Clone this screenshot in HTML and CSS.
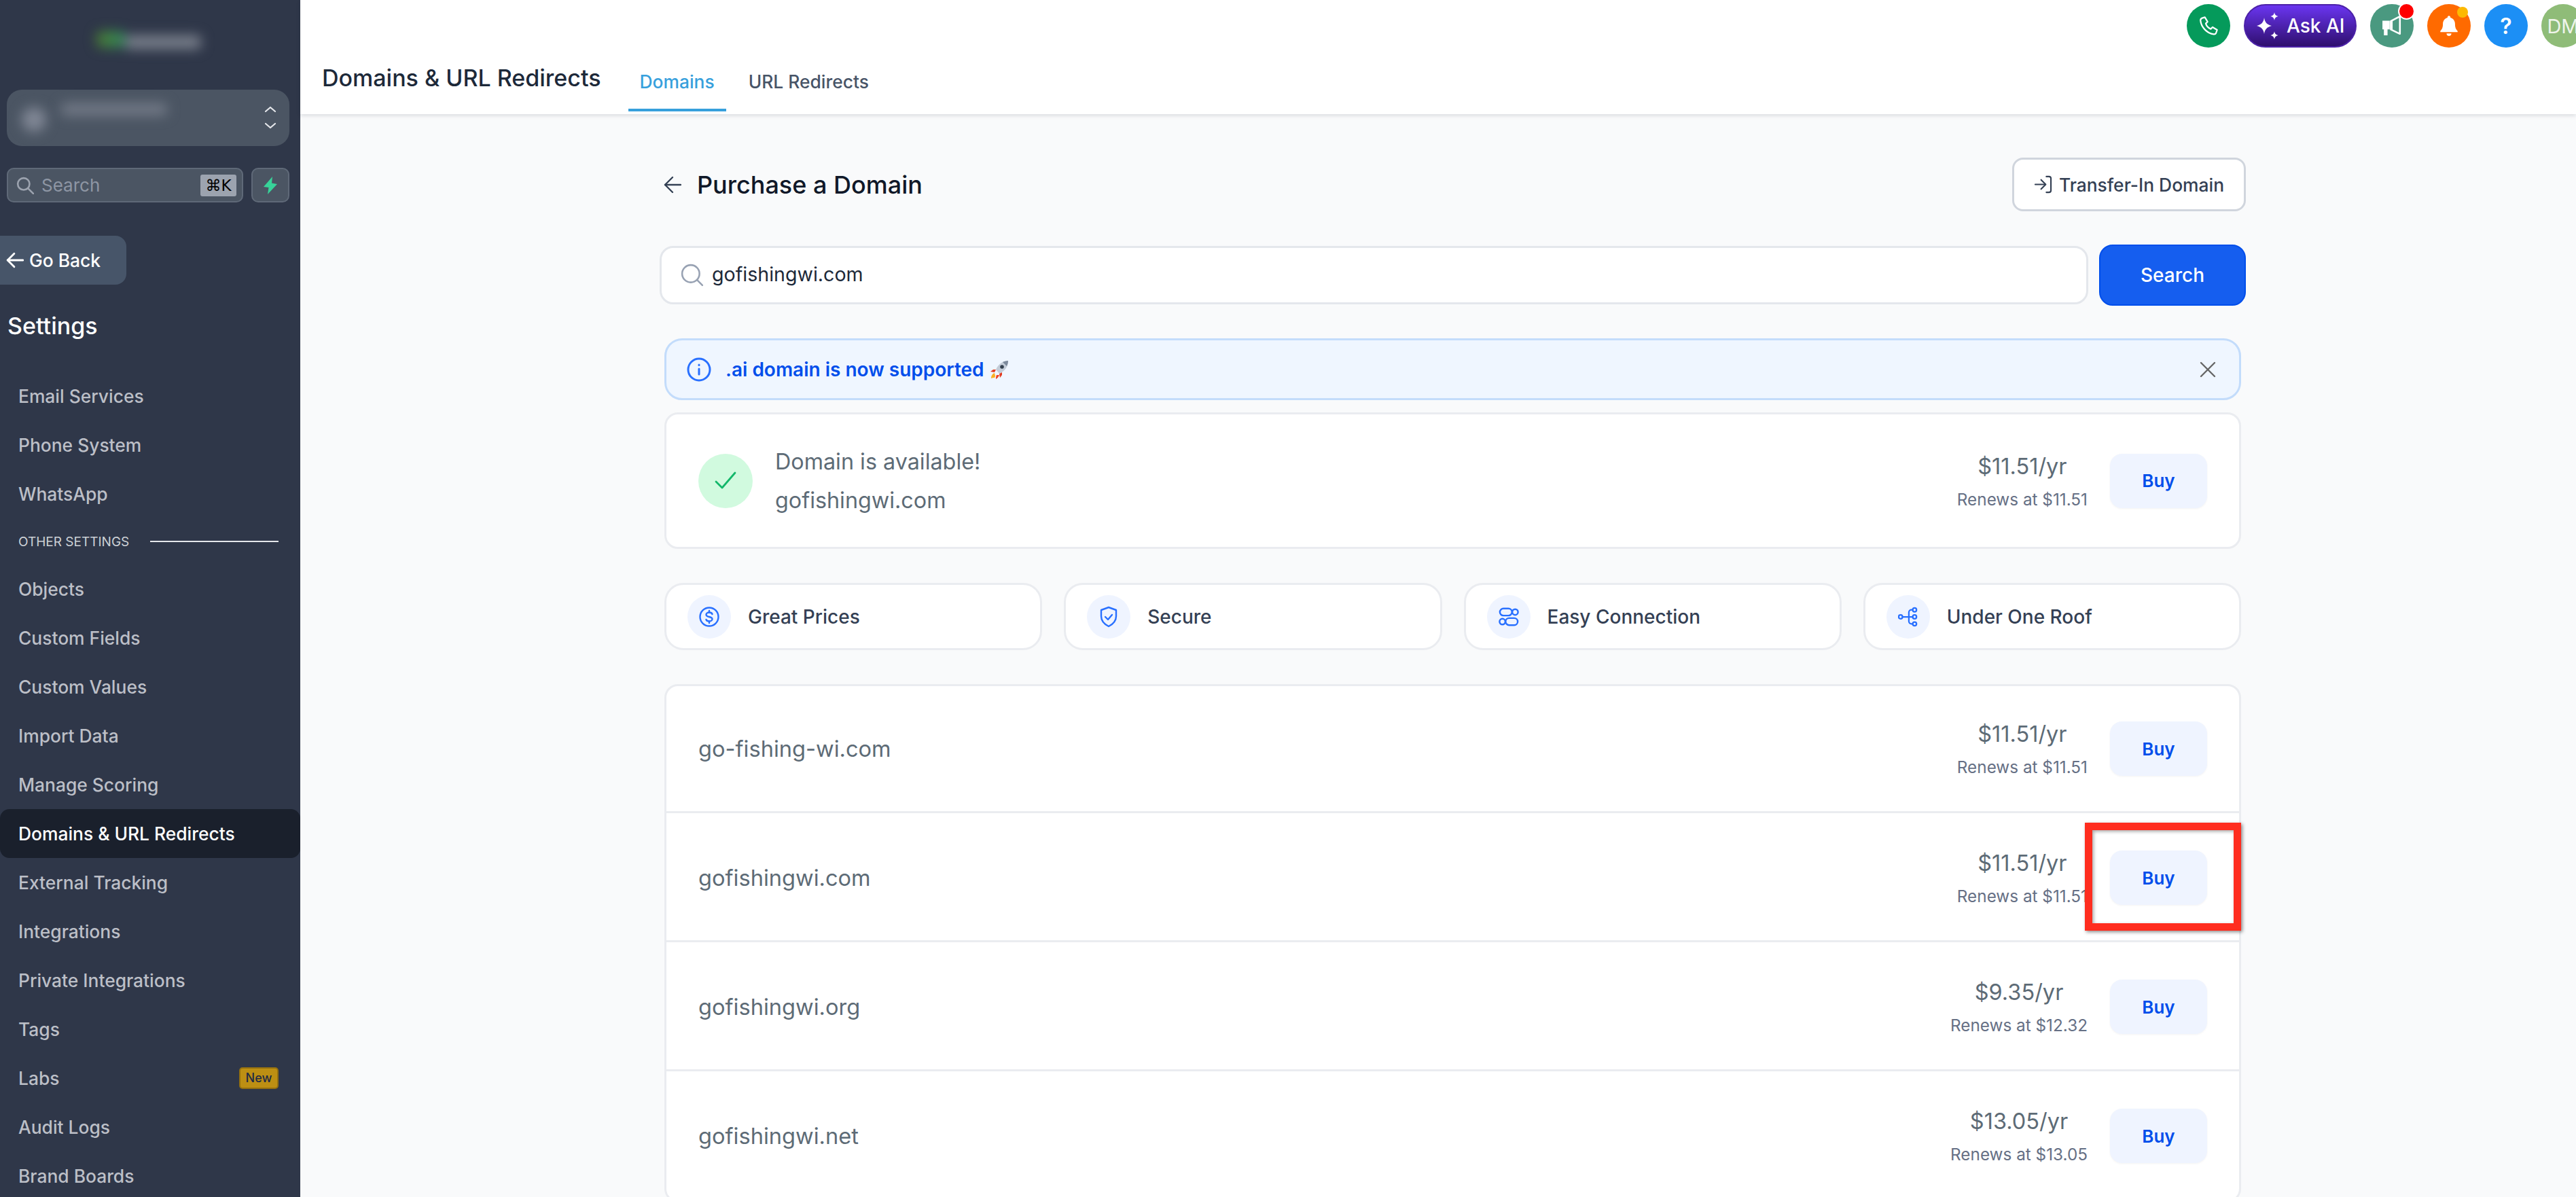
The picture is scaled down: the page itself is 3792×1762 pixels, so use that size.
FILE: index.html
```html
<!DOCTYPE html>
<html lang="en">
<head>
    <meta charset="UTF-8">
    <title>Domains &amp; URL Redirects</title>
    <link rel="stylesheet" href="styles.css">
</head>
<body>
    <aside class="sidebar">
        <div class="logo">
            <span class="logo-mark"></span>
            <span class="logo-name"></span>
        </div>

        <div class="switcher">
            <span class="switcher-dot"></span>
            <span class="switcher-name"></span>
            <svg class="switcher-arrows" viewBox="0 0 20 36" fill="none" stroke="#e5e7eb" stroke-width="2.2" stroke-linecap="round" stroke-linejoin="round"><path d="M3 9l7-6 7 6"/><path d="M3 27l7 6 7-6"/></svg>
        </div>

        <div class="side-search-row">
            <div class="side-search">
                <svg class="side-search-icon" viewBox="0 0 24 24" fill="none" stroke="#9ca3af" stroke-width="2.4" stroke-linecap="round"><circle cx="10" cy="10" r="8"/><path d="M16 16l7 7"/></svg>
                <span class="side-search-text">Search</span>
                <span class="kbd">⌘K</span>
            </div>
            <div class="bolt-btn">
                <svg viewBox="0 0 24 26" width="24" height="26"><path d="M15 0L2 15l7.500 1L8 26l14-15-8-1.500z" fill="#37d399"/></svg>
            </div>
        </div>

        <div class="go-back">
            <svg viewBox="0 0 24 24" width="26" height="26" fill="none" stroke="#fff" stroke-width="2.6" stroke-linecap="round" stroke-linejoin="round"><path d="M23 12H2"/><path d="M11 3l-9 9 9 9"/></svg>
            <span>Go Back</span>
        </div>

        <div class="side-title">Settings</div>

        <nav class="menu">
            <a class="menu-item">Email Services</a>
            <a class="menu-item">Phone System</a>
            <a class="menu-item">WhatsApp</a>
            <div class="menu-section"><span>OTHER SETTINGS</span><i></i></div>
            <a class="menu-item">Objects</a>
            <a class="menu-item">Custom Fields</a>
            <a class="menu-item">Custom Values</a>
            <a class="menu-item">Import Data</a>
            <a class="menu-item">Manage Scoring</a>
            <a class="menu-item active">Domains &amp; URL Redirects</a>
            <a class="menu-item">External Tracking</a>
            <a class="menu-item">Integrations</a>
            <a class="menu-item">Private Integrations</a>
            <a class="menu-item">Tags</a>
            <a class="menu-item">Labs <span class="badge-new">New</span></a>
            <a class="menu-item">Audit Logs</a>
            <a class="menu-item">Brand Boards</a>
        </nav>
    </aside>

    <div class="main">
        <header class="topbar">
            <div class="actions">
                <span class="circle green">
                    <svg viewBox="0 0 24 24" width="32" height="32" fill="none" stroke="#fff" stroke-width="1.700" stroke-linecap="round" stroke-linejoin="round"><path d="M5 3.500l3-1 3 5-2 2c.8 2.600 2.900 4.900 5.500 6l2-2 5 3-1 3c-.4 1.200-1.500 2-2.800 1.800C10.500 20.300 4 13.700 3.200 6.300 3.100 5 3.900 3.900 5 3.500z"/></svg>
                </span>
                <span class="ask-ai">
                    <svg viewBox="0 0 36 40" width="36" height="40" fill="#fff"><path d="M13 8c1 7 4 10 11 12-7 2-10 5-11 12-1-7-4-10-11-12 7-2 10-5 11-12z"/><path d="M28 0c.6 3.500 2 5 5.500 6-3.500 1-4.900 2.500-5.500 6-.6-3.500-2-5-5.500-6 3.500-1 4.900-2.500 5.500-6z"/><path d="M28 28c.6 3.500 2 5 5.500 6-3.500 1-4.900 2.500-5.500 6-.6-3.500-2-5-5.500-6 3.500-1 4.900-2.500 5.500-6z"/></svg>
                    Ask AI
                </span>
                <span class="circle teal">
                    <svg viewBox="0 0 28 28" width="30" height="30"><path d="M1 7h10l0 12H8v8H3v-8H1z" fill="#fff"/><path d="M12.500 7.500L25 1v24l-12.500-6z" fill="none" stroke="#fff" stroke-width="2.400" stroke-linejoin="round"/><path d="M12 7h3v12h-3z" fill="#fff"/></svg>
                    <i class="dot-red"></i>
                </span>
                <span class="circle orange">
                    <svg viewBox="0 0 24 24" width="34" height="34" fill="#fff"><path d="M12 1.500c.9 0 1.500.7 1.500 1.500v.6c3 .8 4.800 3.400 4.800 6.400 0 4 1 5.500 2.700 7.500v1H3v-1c1.700-2 2.700-3.500 2.700-7.500 0-3 1.800-5.600 4.800-6.400V3c0-.8.600-1.500 1.500-1.500z"/><path d="M9.500 20h5a2.500 2.500 0 0 1-5 0z"/></svg>
                    <i class="dot-yellow"></i>
                </span>
                <span class="circle blue help">?</span>
                <span class="circle sage avatar">DM</span>
            </div>
            <div class="page-nav">
                <h1 class="page-name">Domains &amp; URL Redirects</h1>
                <div class="tabs">
                    <a class="tab active">Domains</a>
                    <a class="tab">URL Redirects</a>
                </div>
            </div>
        </header>

        <main class="content">
            <div class="title-row">
                <div class="title-left">
                    <svg viewBox="0 0 26 26" width="26" height="26" fill="none" stroke="#344054" stroke-width="2.400" stroke-linecap="round" stroke-linejoin="round"><path d="M25 13H2"/><path d="M13 2L2 13l11 11"/></svg>
                    <h2>Purchase a Domain</h2>
                </div>
                <button class="btn-transfer">
                    <svg viewBox="0 0 28 28" width="27" height="27" fill="none" stroke="#344054" stroke-width="2.200" stroke-linecap="round" stroke-linejoin="round"><path d="M2 14h15"/><path d="M11 7l7 7-7 7"/><path d="M19 2h4a3 3 0 0 1 3 3v18a3 3 0 0 1-3 3h-4"/></svg>
                    Transfer-In Domain
                </button>
            </div>

            <div class="search-row">
                <div class="search-box">
                    <svg viewBox="0 0 32 32" width="34" height="34" fill="none" stroke="#98a2b3" stroke-width="2.400" stroke-linecap="round"><circle cx="14" cy="14" r="12"/><path d="M23 23l7 7"/></svg>
                    <span>gofishingwi.com</span>
                </div>
                <button class="btn-search">Search</button>
            </div>

            <div class="inner">
                <div class="notice">
                    <svg viewBox="0 0 36 36" width="36" height="36" fill="none" stroke="#2970ff" stroke-width="3" stroke-linecap="round"><circle cx="18" cy="18" r="16"/><path d="M18 17v8"/><path d="M18 11v.5"/></svg>
                    <span class="notice-text">.ai domain is now supported</span>
                    <svg class="rocket" viewBox="0 0 28 28" width="28" height="28"><path d="M7 19c-3 1-5 4-5 8 2-1 3-1 5-1 0 0 1-1 1-3z" fill="#fbb024"/><path d="M10 22c-1 2-1 4-1 6 2-1 4-3 5-6z" fill="#ef4423"/><path d="M5 14l-4 3 6 1 2-4z" fill="#e23c22"/><path d="M14 20l1 6 3-4 0-4z" fill="#e23c22"/><path d="M27 1c-7 0-14 4-18 13l5 6c9-4 13-11 13-19z" fill="#c3ccd8"/><path d="M27 1c-3 0-6 1-8 2l6 6c1-2 2-5 2-8z" fill="#7d8a9c"/><circle cx="18" cy="10" r="2.800" fill="#33404f"/></svg>
                    <svg class="notice-close" viewBox="0 0 24 24" width="24" height="24" fill="none" stroke="#666" stroke-width="2.400" stroke-linecap="round"><path d="M2 2l20 20"/><path d="M22 2L2 22"/></svg>
                </div>

                <div class="available card">
                    <span class="check-circle">
                        <svg viewBox="0 0 32 32" width="32" height="32" fill="none" stroke="#12b76a" stroke-width="2.800" stroke-linecap="round" stroke-linejoin="round"><path d="M2 17l9 9L30 4"/></svg>
                    </span>
                    <div class="available-text">
                        <div>Domain is available!</div>
                        <div>gofishingwi.com</div>
                    </div>
                    <div class="price">
                        <span class="price-year">$11.51/yr</span>
                        <span class="price-renew">Renews at $11.51</span>
                    </div>
                    <button class="btn-buy">Buy</button>
                </div>

                <div class="features">
                    <div class="feature">
                        <span class="feature-icon">
                            <svg viewBox="0 0 32 32" width="32" height="32" fill="none" stroke="#2970ff" stroke-width="2.400" stroke-linecap="round" stroke-linejoin="round"><circle cx="16" cy="16" r="13.500"/><path d="M20.500 12c-.5-1.500-2.500-2.500-4.500-2.500-2.500 0-4.500 1.300-4.500 3.200 0 4.300 9 2.300 9 6.600 0 1.900-2 3.200-4.500 3.200-2 0-4-1-4.500-2.500"/><path d="M16 7v2.500M16 22.500V25"/></svg>
                        </span>
                        Great Prices
                    </div>
                    <div class="feature">
                        <span class="feature-icon">
                            <svg viewBox="0 0 32 32" width="32" height="32" fill="none" stroke="#2970ff" stroke-width="2.400" stroke-linecap="round" stroke-linejoin="round"><path d="M16 2l11 4v9c0 7-5 12-11 15C10 27 5 22 5 15V6z"/><path d="M11 16l4 4 6-7"/></svg>
                        </span>
                        Secure
                    </div>
                    <div class="feature">
                        <span class="feature-icon">
                            <svg viewBox="0 0 32 32" width="30" height="30" fill="none" stroke="#2970ff" stroke-width="2.600" stroke-linejoin="round"><rect x="2" y="3" width="19" height="11" rx="5.500"/><circle cx="26" cy="8.500" r="4.500"/><circle cx="6" cy="23.500" r="4.500"/><rect x="11" y="18" width="19" height="11" rx="5.500"/></svg>
                        </span>
                        Easy Connection
                    </div>
                    <div class="feature">
                        <span class="feature-icon">
                            <svg viewBox="0 0 32 32" width="30" height="30" fill="none" stroke="#2970ff" stroke-width="2.400" stroke-linecap="round"><circle cx="4" cy="16" r="3"/><circle cx="26" cy="5" r="3"/><circle cx="26" cy="16" r="3"/><circle cx="26" cy="27" r="3"/><path d="M7 16h16"/><path d="M23 5h-2a4 4 0 0 0-4 4v14a4 4 0 0 0 4 4h2"/></svg>
                        </span>
                        Under One Roof
                    </div>
                </div>

                <div class="results card">
                    <div class="result">
                        <span class="domain">go-fishing-wi.com</span>
                        <div class="price">
                            <span class="price-year">$11.51/yr</span>
                            <span class="price-renew">Renews at $11.51</span>
                        </div>
                        <button class="btn-buy">Buy</button>
                    </div>
                    <div class="result">
                        <span class="domain">gofishingwi.com</span>
                        <div class="price">
                            <span class="price-year">$11.51/yr</span>
                            <span class="price-renew">Renews at $11.51</span>
                        </div>
                        <button class="btn-buy">Buy</button>
                        <div class="highlight"></div>
                    </div>
                    <div class="result">
                        <span class="domain">gofishingwi.org</span>
                        <div class="price">
                            <span class="price-year">$9.35/yr</span>
                            <span class="price-renew">Renews at $12.32</span>
                        </div>
                        <button class="btn-buy">Buy</button>
                    </div>
                    <div class="result">
                        <span class="domain">gofishingwi.net</span>
                        <div class="price">
                            <span class="price-year">$13.05/yr</span>
                            <span class="price-renew">Renews at $13.05</span>
                        </div>
                        <button class="btn-buy">Buy</button>
                    </div>
                </div>
            </div>
        </main>
    </div>
</body>
</html>
```

FILE: styles.css
```css
* {
    box-sizing: border-box;
}

html, body {
    height: 100%;
}

body {
    margin: 0;
    display: flex;
    overflow: hidden;
    font-family: Inter, "Noto Sans", sans-serif;
    background-color: #f9fafb;
    color: #101828;
}

button {
    font-family: inherit;
    cursor: pointer;
}

/* Sidebar */
.sidebar {
    width: 442px;
    height: 1762px;
    flex-shrink: 0;
    overflow: hidden;
    background-color: #2f3749;
}

.logo {
    height: 132px;
    padding: 46px 0 0 142px;
    display: flex;
    filter: blur(9px);
}

.logo-mark {
    width: 42px;
    height: 24px;
    background: linear-gradient(90deg, #4d7a30, #2f8a5c);
    border-radius: 8px;
}

.logo-name {
    width: 112px;
    height: 20px;
    margin-top: 6px;
    background-color: #7a808c;
    border-radius: 6px;
}

.switcher {
    height: 83px;
    margin: 0 16px 0 10px;
    position: relative;
    display: flex;
    background-color: #4b5563;
    border-radius: 22px;
}

.switcher-dot {
    width: 36px;
    height: 36px;
    margin: 26px 0 0 22px;
    background-color: #808795;
    border-radius: 50%;
    filter: blur(9px);
}

.switcher-name {
    width: 156px;
    height: 18px;
    margin: 20px 0 0 22px;
    background-color: #737a87;
    border-radius: 6px;
    filter: blur(9px);
}

.switcher-arrows {
    position: absolute;
    right: 18px;
    top: 23px;
    width: 20px;
    height: 36px;
}

.side-search-row {
    margin: 32px 16px 0 10px;
    display: flex;
    gap: 12px;
}

.side-search {
    flex: 1;
    height: 51px;
    padding: 0 8px 0 12px;
    display: flex;
    align-items: center;
    background-color: #4b5563;
    border: 2px solid #5f6978;
    border-radius: 10px;
}

.side-search-icon {
    width: 26px;
    height: 26px;
}

.side-search-text {
    flex: 1;
    margin-left: 11px;
    font-size: 26px;
    color: #8e96a4;
}

.kbd {
    width: 53px;
    height: 32px;
    line-height: 32px;
    text-align: center;
    font-size: 23px;
    font-family: "DejaVu Sans", Inter, sans-serif;
    color: #000;
    background-color: #9ca3af;
    border-radius: 3px;
}

.bolt-btn {
    width: 56px;
    height: 51px;
    display: flex;
    align-items: center;
    justify-content: center;
    background-color: #4b5563;
    border: 2px solid #5f6978;
    border-radius: 10px;
}

.go-back {
    width: 186px;
    height: 72px;
    margin-top: 49px;
    padding-left: 9px;
    display: flex;
    align-items: center;
    gap: 8px;
    font-size: 26.400px;
    font-weight: 500;
    color: #fff;
    background-color: #475569;
    border-radius: 0 16px 16px 0;
}

.side-title {
    margin: 39px 0 45px 11px;
    height: 44px;
    line-height: 44px;
    font-size: 34px;
    font-weight: 500;
    color: #fff;
}

.menu-item {
    height: 72px;
    padding: 0 32px 0 27px;
    display: flex;
    align-items: center;
    justify-content: space-between;
    font-size: 26.400px;
    font-weight: 500;
    color: #bcbfc7;
}

.menu-item.active {
    color: #fff;
    background-color: #1a202c;
    border-radius: 14px;
}

.menu-section {
    height: 68px;
    padding: 0 32px 0 27px;
    display: flex;
    align-items: center;
    gap: 31px;
    font-size: 19px;
    color: #cdd1d6;
}

.menu-section i {
    flex: 1;
    height: 2px;
    background-color: #e5e7eb;
}

.badge-new {
    width: 58px;
    height: 32px;
    line-height: 28px;
    text-align: center;
    font-size: 18px;
    font-weight: 500;
    color: #1f2a44;
    background-color: #bd8f13;
    border: 2px solid #94700f;
    border-radius: 5px;
}

/* Top bar */
.main {
    flex: 1;
    min-width: 0;
}

.topbar {
    height: 168px;
    background-color: #fff;
    box-shadow: 0 2px 6px rgba(16, 24, 40, 0.14);
}

.actions {
    height: 76px;
    margin-right: -13px;
    padding-top: 6px;
    display: flex;
    justify-content: flex-end;
    gap: 20px;
}

.circle {
    width: 64px;
    height: 64px;
    position: relative;
    display: flex;
    align-items: center;
    justify-content: center;
    border-radius: 50%;
    color: #fff;
}

.green { background-color: #059a5b; }
.teal { background-color: #4a9980; }
.orange { background-color: #ff6a00; }
.blue { background-color: #1c8ff5; }
.sage { background-color: #8fbc78; }

.help {
    font-size: 32px;
    font-weight: 600;
}

.avatar {
    font-size: 29px;
    color: #eef4ea;
}

.ask-ai {
    width: 166px;
    height: 64px;
    padding-left: 15px;
    display: flex;
    align-items: center;
    gap: 10px;
    font-size: 28px;
    font-weight: 500;
    color: #fff;
    background: linear-gradient(180deg, #6a35f0, #2f0f6e);
    border: 2px solid #4c22a8;
    border-radius: 32px;
}

.dot-red {
    width: 25px;
    height: 25px;
    position: absolute;
    top: -2px;
    right: -2px;
    background-color: #f00;
    border: 2px solid #fff;
    border-radius: 50%;
}

.dot-yellow {
    width: 16px;
    height: 16px;
    position: absolute;
    top: 4px;
    right: 4px;
    background-color: #fdb900;
    border-radius: 50%;
}

.page-nav {
    height: 88px;
    padding-left: 32px;
    display: flex;
}

.page-name {
    margin: 19px 0 0;
    font-size: 34px;
    line-height: 40px;
    font-weight: 500;
    color: #1d2939;
}

.tabs {
    margin-left: 40px;
    display: flex;
    gap: 16px;
}

.tab {
    padding: 26px 17px 0;
    height: 88px;
    font-size: 26.400px;
    line-height: 36px;
    font-weight: 500;
    color: #475467;
    border-bottom: 4px solid transparent;
}

.tab.active {
    color: #37a0dc;
    border-bottom-color: #37a0dc;
}

/* Page content */
.content {
    width: 2335px;
    margin-left: 529px;
    padding-top: 64px;
}

.title-row {
    height: 79px;
    padding-left: 6px;
    display: flex;
    align-items: center;
    justify-content: space-between;
}

.title-left {
    display: flex;
    align-items: center;
    gap: 23px;
}

.title-left h2 {
    margin: 0;
    font-size: 36px;
    font-weight: 500;
    color: #101828;
}

.btn-transfer {
    width: 344px;
    height: 79px;
    display: flex;
    align-items: center;
    justify-content: center;
    gap: 10px;
    font-size: 26.400px;
    font-weight: 500;
    color: #344054;
    background-color: #fff;
    border: 3px solid #d0d5dd;
    border-radius: 16px;
}

.search-row {
    margin-top: 49px;
    display: flex;
    align-items: center;
    gap: 16px;
}

.search-box {
    flex: 1;
    height: 86px;
    padding: 0 28px;
    display: flex;
    align-items: center;
    gap: 12px;
    font-size: 28.600px;
    color: #1d2939;
    background-color: #fff;
    border: 3px solid #e4e7ec;
    border-radius: 20px;
}

.search-box span {
    margin-bottom: 4px;
}

.btn-search {
    width: 216px;
    height: 90px;
    font-size: 28px;
    font-weight: 500;
    color: #fff;
    background-color: #155eef;
    border: 2px solid #004eeb;
    border-radius: 20px;
}

.inner {
    margin: 48px 7px 0;
}

.notice {
    height: 91px;
    padding: 0 34px 0 30px;
    display: flex;
    align-items: center;
    font-size: 28px;
    font-weight: 600;
    color: #004eeb;
    background-color: #eff6ff;
    border: 3px solid #c3dcfb;
    border-radius: 26px;
}

.notice-text {
    margin-left: 21px;
}

.rocket {
    margin-left: 8px;
}

.notice-close {
    margin-left: auto;
}

.card {
    background-color: #fff;
    border: 3px solid #eaecf0;
    border-radius: 20px;
}

.available {
    height: 201px;
    margin-top: 18px;
    padding: 0 47px;
    display: flex;
    align-items: center;
}

.check-circle {
    width: 80px;
    height: 80px;
    display: flex;
    align-items: center;
    justify-content: center;
    background-color: #d1fadf;
    border-radius: 50%;
}

.available-text {
    flex: 1;
    margin-left: 33px;
    font-size: 32.300px;
    line-height: 57px;
    color: #5d6b76;
}

.features {
    margin-top: 50px;
    display: grid;
    grid-template-columns: repeat(4, 1fr);
    gap: 32px;
}

.feature {
    height: 99px;
    padding-left: 31px;
    display: flex;
    align-items: center;
    gap: 25px;
    font-size: 28px;
    font-weight: 500;
    color: #344054;
    background-color: #fff;
    border: 3px solid #eaecf0;
    border-radius: 28px;
}

.feature-icon {
    width: 64px;
    height: 64px;
    display: flex;
    align-items: center;
    justify-content: center;
    background-color: #eff4ff;
    border-radius: 50%;
}

.results {
    margin-top: 50px;
}

.result {
    height: 190px;
    padding: 3px 47px 0;
    position: relative;
    display: flex;
    align-items: center;
    border-bottom: 3px solid #eaecf0;
}

.result:first-child {
    height: 187px;
    padding-top: 0;
}

.domain {
    flex: 1;
    font-size: 32.600px;
    color: #5d6b76;
}

.price {
    display: flex;
    flex-direction: column;
    align-items: center;
    margin-right: 33px;
}

.price-year {
    font-size: 32.500px;
    line-height: 44px;
    color: #5d6b76;
}

.price-renew {
    margin-top: 10px;
    font-size: 24.300px;
    line-height: 32px;
    color: #667085;
}

.btn-buy {
    width: 143px;
    height: 80px;
    font-size: 26px;
    font-weight: 600;
    color: #004eeb;
    background-color: #eff4ff;
    border: none;
    border-radius: 18px;
    box-shadow: 0 1px 3px rgba(16, 24, 40, 0.05);
}

/* Red box drawn over the second result */
.highlight {
    width: 230px;
    height: 159px;
    position: absolute;
    top: 14px;
    right: -3px;
    border: 11px solid #ff2d1f;
    box-shadow: 2px 2px 5px rgba(0, 0, 0, 0.45), inset 2px 2px 5px rgba(0, 0, 0, 0.35);
}
```
